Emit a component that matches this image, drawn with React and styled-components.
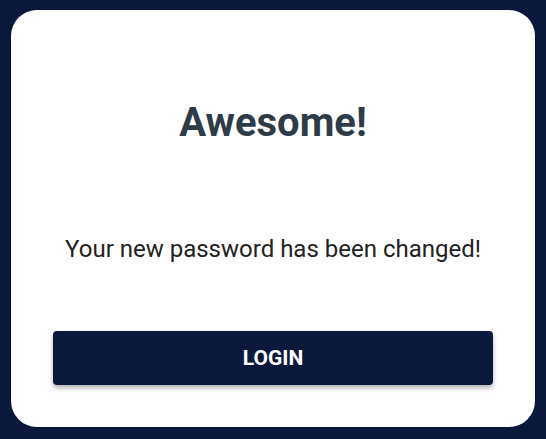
import React from 'react'
import styled, { createGlobalStyle } from 'styled-components'

const GlobalStyle = createGlobalStyle`
  html, body {
    margin: 0;
    padding: 0;
    background: #0a193b;
    font-family: Roboto, 'Noto Sans', sans-serif;
  }
  * {
    box-sizing: border-box;
  }
`

const Page = styled.main`
  width: 546px;
  height: 439px;
  padding: 10px 11px 12px 11px;
`

const Card = styled.section`
  height: 417px;
  background: #ffffff;
  border-radius: 26px;
  padding: 89px 42px 42px 42px;
  display: flex;
  flex-direction: column;
  align-items: center;
`

const Title = styled.h1`
  margin: 0;
  font-size: 40px;
  line-height: 48px;
  font-weight: 700;
  color: #2e3c49;
`

const Message = styled.p`
  margin: 88px 0 0 0;
  font-size: 24px;
  line-height: 28px;
  color: #222222;
`

const Button = styled.button`
  margin-top: auto;
  width: 100%;
  height: 54px;
  border: none;
  border-radius: 4px;
  background: #0a193b;
  color: #ffffff;
  font-family: inherit;
  font-size: 21px;
  font-weight: 700;
  text-transform: uppercase;
  box-shadow: 0 3px 5px rgba(0, 0, 0, 0.3);
  cursor: pointer;
`

const App = () => {
  return (
    <Page>
      <GlobalStyle />
      <Card>
        <Title>Awesome!</Title>
        <Message>Your new password has been changed!</Message>
        <Button type='button'>Login</Button>
      </Card>
    </Page>
  )
}

export default App
